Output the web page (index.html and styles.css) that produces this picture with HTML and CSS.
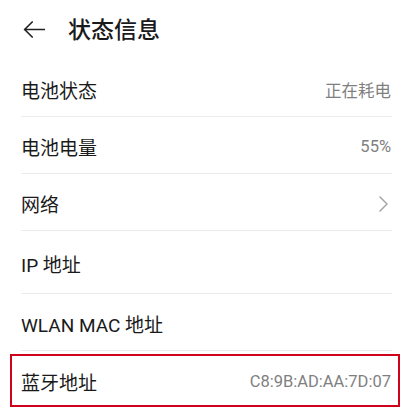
FILE: index.html
```html
<!DOCTYPE html>
<html lang="zh-CN">
<head>
<meta charset="utf-8">
<title>状态信息</title>
<link rel="stylesheet" href="styles.css">
</head>
<body>
<div class="page">
  <header class="header">
    <svg class="back" width="22" height="17" viewBox="0 0 22 17" aria-hidden="true">
      <path d="M21.5 8.5H1.6M9.2 1L1.6 8.5L9.2 16" fill="none" stroke="#222" stroke-width="1.7" stroke-linecap="round" stroke-linejoin="round"/>
    </svg>
    <h1 class="title">状态信息</h1>
  </header>
  <ul class="list">
    <li class="row"><span class="label">电池状态</span><span class="value">正在耗电</span></li>
    <li class="row"><span class="label">电池电量</span><span class="value">55%</span></li>
    <li class="row"><span class="label">网络</span>
      <svg class="chev" width="9" height="16" viewBox="0 0 9 16" aria-hidden="true"><path d="M1 1L8 8L1 15" fill="none" stroke="#a6a6a6" stroke-width="1.5" stroke-linecap="round" stroke-linejoin="round"/></svg>
    </li>
    <li class="row row-tall"><span class="label">IP 地址</span></li>
    <li class="row"><span class="label">WLAN MAC 地址</span></li>
    <li class="row row-last"><span class="label">蓝牙地址</span><span class="value">C8:9B:AD:AA:7D:07</span><span class="highlight"></span></li>
  </ul>
</div>
</body>
</html>
```
FILE: styles.css
```css
html, body {
  margin: 0;
  padding: 0;
  background: #ffffff;
}
body {
  font-family: "Roboto", "Noto Sans CJK SC", sans-serif;
  color: #1a1a1a;
}
.page {
  width: 406px;
}
.header {
  height: 60px;
  display: flex;
  align-items: center;
  padding-left: 23px;
  box-sizing: border-box;
}
.back {
  display: block;
  margin-top: -1px;
}
.title {
  margin: 0 0 0 23px;
  font-size: 23px;
  font-weight: 500;
  line-height: 1;
  color: #1a1a1a;
}
.list {
  list-style: none;
  margin: 0;
  padding: 0 14px 0 21px;
}
.row {
  position: relative;
  height: 57px;
  display: flex;
  align-items: center;
  justify-content: space-between;
  border-bottom: 1px solid #ececec;
  box-sizing: border-box;
  padding-top: 3px;
}
.row-tall {
  height: 63px;
}
.row-last {
  border-bottom: none;
}
.label {
  font-size: 19px;
  color: #1a1a1a;
}
.value {
  font-size: 16.5px;
  color: #7f7f7f;
  padding-right: 1px;
}
.chev {
  display: block;
  margin-right: 4px;
}
.highlight {
  position: absolute;
  top: 3px;
  left: -11px;
  right: -8px;
  bottom: 1px;
  border: 2px solid #d0021b;
  pointer-events: none;
}
```
